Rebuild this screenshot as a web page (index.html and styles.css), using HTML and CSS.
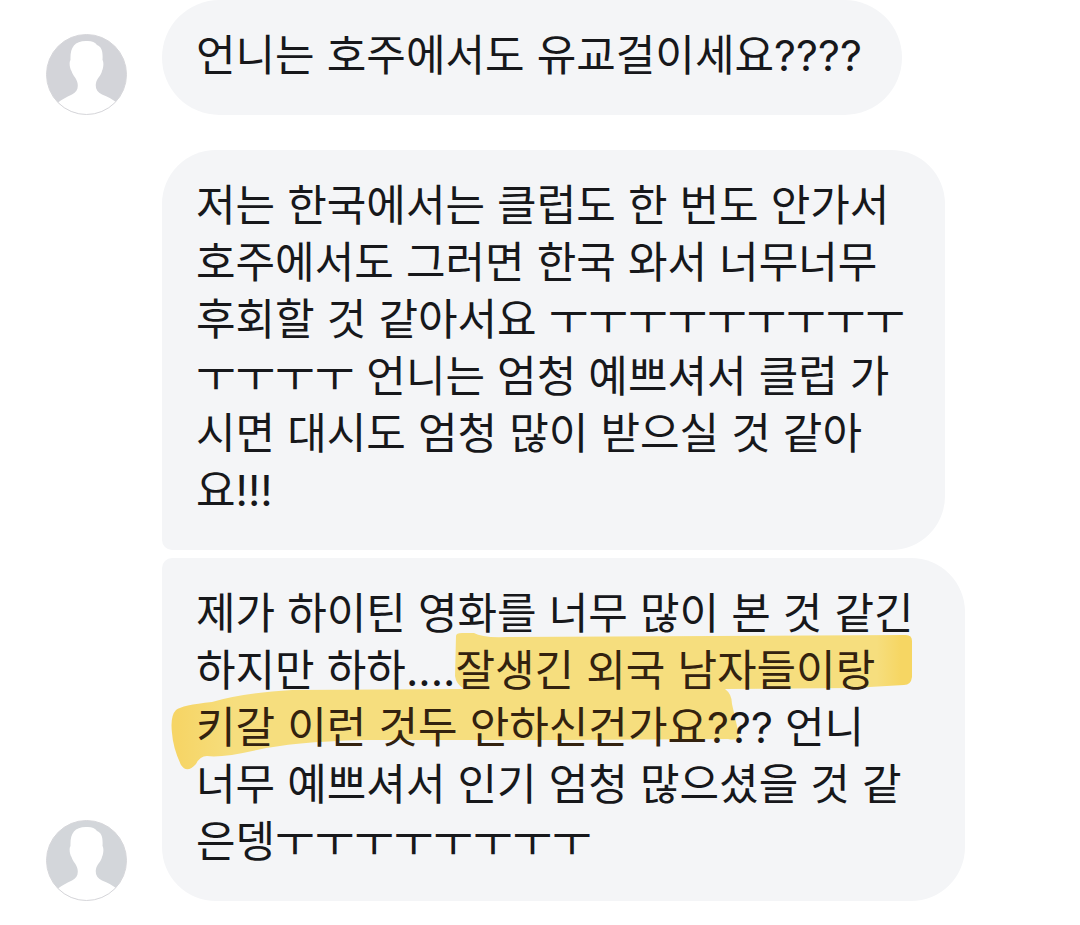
FILE: index.html
```html
<!DOCTYPE html>
<html lang="ko">
<head>
<meta charset="utf-8">
<meta name="viewport" content="width=device-width, initial-scale=1">
<title>메시지</title>
<link rel="stylesheet" href="styles.css">
</head>
<body>
<main class="chat">
  <section class="group">
    <svg class="avatar" viewBox="0 0 81 81" role="img" aria-label="프로필">
      <circle cx="40.5" cy="40.5" r="40" fill="#d3d4d9"/>
      <path id="person" d="M40 7C45 6.500 49 8 51 11C56 13 57 18 56.500 26C58 28 57.500 34 56 37C55 42 51 44 50 49C49 54 51 58 56 60.500C62 63 66 65 70 68A40 40 0 0 1 12 68.500C16 65 21 63 26 60.500C31 58 32.500 54 31.500 49C30.500 44 27 42 25.500 37C23.500 34 23 28 24.500 26C24 14 28 7 40 7Z" fill="#fff"/>
      <circle cx="40.5" cy="40.5" r="40" fill="none" stroke="#d6d6da"/>
    </svg>
    <div class="messages">
      <p class="bubble bubble-single"><span class="text">언니는 호주에서도 유교걸이세요????</span></p>
    </div>
  </section>
  <section class="group">
    <svg class="avatar" viewBox="0 0 81 81" role="img" aria-label="프로필">
      <circle cx="40.5" cy="40.5" r="40" fill="#d3d6da"/>
      <use href="#person"/>
      <circle cx="40.5" cy="40.5" r="40" fill="none" stroke="#d6d6da"/>
    </svg>
    <div class="messages">
      <p class="bubble bubble-first"><span class="text">저는 한국에서는 클럽도 한 번도 안가서<br>호주에서도 그러면 한국 와서 너무너무<br>후회할 것 같아서요 ㅜㅜㅜㅜㅜㅜㅜㅜㅜ<br>ㅜㅜㅜㅜ 언니는 엄청 예쁘셔서 클럽 가<br>시면 대시도 엄청 많이 받으실 것 같아<br>요!!!</span></p>
      <p class="bubble bubble-last">
        <svg class="marker" viewBox="0 0 803 344" aria-hidden="true">
          <defs>
            <linearGradient id="ink" gradientUnits="userSpaceOnUse" x1="0" y1="0" x2="803" y2="0">
              <stop offset="0.02" stop-color="#f6d566"/>
              <stop offset="0.09" stop-color="#f6de7e"/>
              <stop offset="0.89" stop-color="#f6de7e"/>
              <stop offset="0.92" stop-color="#f6d663"/>
            </linearGradient>
          </defs>
          <path fill="url(#ink)" d="M294 78Q294 75 300 75L312 75Q320 80 345 79L744 77Q750 77 750 83L750 119Q749 127 742 127L690 130L563 131Q570 136 570 146L577 177Q577 183 566 181L400 182L200 182Q130 184 95 192Q60 200 45 198Q38 198 34 206Q25 216 19 207Q11 190 10 175Q8 158 14 152Q20 147 50 144Q80 135 130 132L302 131Q294 126 293 118Z"/>
        </svg>
        <span class="text">제가 하이틴 영화를 너무 많이 본 것 같긴<br>하지만 하하....<mark>잘생긴 외국 남자들이랑<br>키갈 이런 것두 안하신건가요?</mark>?? 언니<br>너무 예쁘셔서 인기 엄청 많으셨을 것 같<br>은뎅ㅜㅜㅜㅜㅜㅜㅜㅜ</span>
      </p>
    </div>
  </section>
</main>
</body>
</html>
```
FILE: styles.css
```css
* {
  box-sizing: border-box;
}

body {
  margin: 0;
  background: #fff;
  color: #17181b;
  font-family: Inter, "Noto Sans CJK KR", sans-serif;
  font-size: 43px;
  line-height: 57px;
}

.chat {
  display: flex;
  flex-direction: column;
  gap: 35px;
  padding: 0 46px 23px;
}

.group {
  display: flex;
  align-items: flex-end;
  gap: 35px;
}

.avatar {
  flex: none;
  width: 81px;
  height: 81px;
}

.messages {
  display: flex;
  flex-direction: column;
  align-items: flex-start;
  gap: 8px;
}

.bubble {
  position: relative;
  margin: 0;
  padding: 27px 40px 31px 34px;
  background: #f4f5f7;
  white-space: nowrap;
}

.bubble-single {
  border-radius: 58px;
}

.bubble-first {
  border-radius: 54px 54px 54px 10px;
}

.bubble-last {
  padding-right: 51px;
  border-radius: 10px 54px 54px 54px;
}

.text {
  position: relative;
}

.marker {
  position: absolute;
  top: 0;
  left: 0;
  width: 803px;
  height: 344px;
}

mark {
  background: none;
  color: #33220f;
}
```
